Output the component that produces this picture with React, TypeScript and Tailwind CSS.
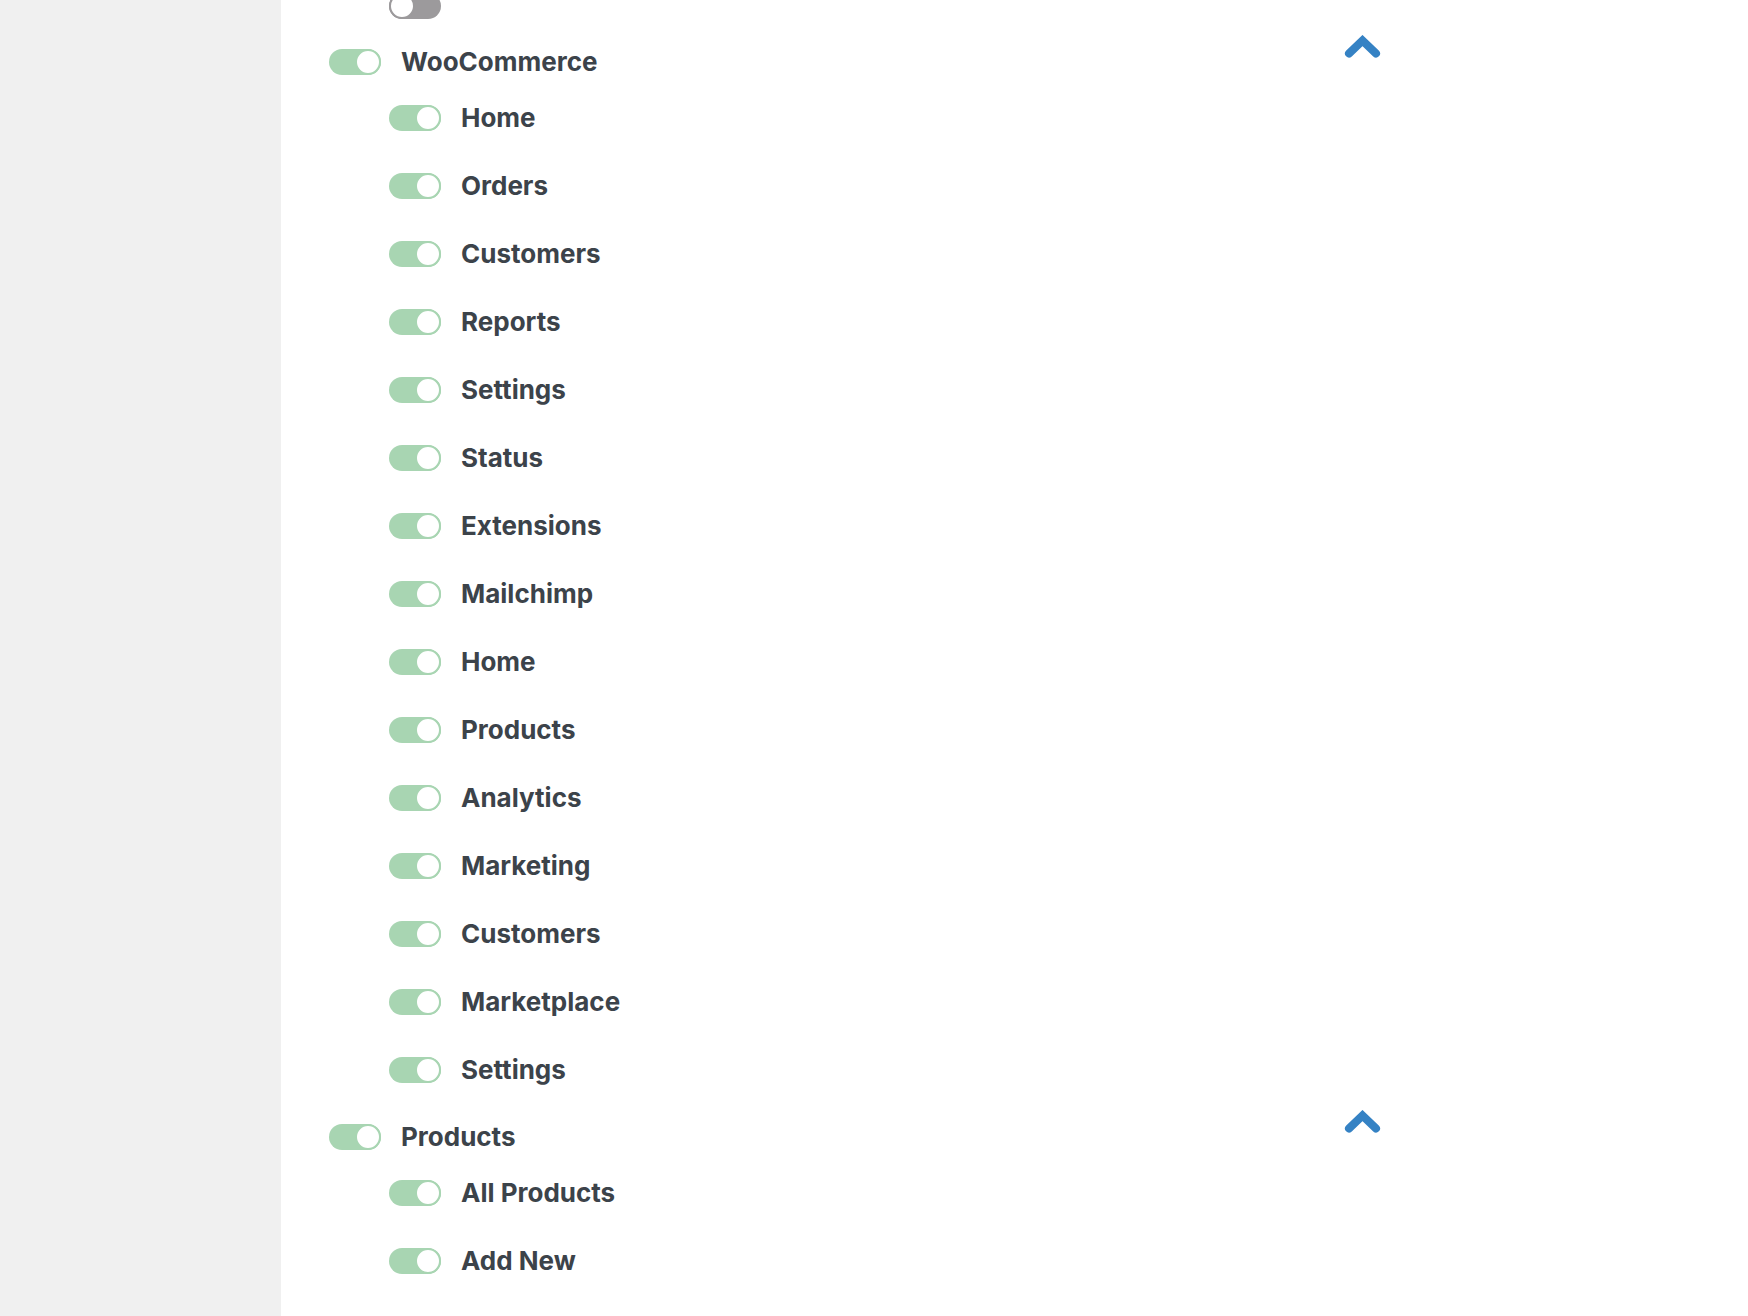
import React from "react";

const Toggle = ({ on = true }: { on?: boolean }) =>
  on ? (
    <div className="flex h-[26px] w-[52px] shrink-0 items-center justify-end rounded-full bg-[#a8d5b2]">
      <div className="h-[26px] w-[26px] rounded-full border-[2px] border-[#a8d5b2] bg-white" />
    </div>
  ) : (
    <div className="flex h-[26px] w-[52px] shrink-0 items-center justify-start rounded-full bg-[#9c9a9c]">
      <div className="h-[26px] w-[26px] rounded-full border-[2px] border-[#9c9a9c] bg-white" />
    </div>
  );

const Chevron = () => (
  <svg width="37" height="23" viewBox="0 0 37 23" className="mt-[-14px] shrink-0">
    <polyline
      points="5,18.5 18.5,5.5 32,18.5"
      fill="none"
      stroke="#3582c4"
      strokeWidth="8"
      strokeLinecap="round"
      strokeLinejoin="miter"
    />
  </svg>
);

const woo = [
  "Home",
  "Orders",
  "Customers",
  "Reports",
  "Settings",
  "Status",
  "Extensions",
  "Mailchimp",
  "Home",
  "Products",
  "Analytics",
  "Marketing",
  "Customers",
  "Marketplace",
  "Settings",
];

const ChildRow = ({ label, first }: { label: string; first?: boolean }) => (
  <div className={`flex h-[26px] items-center gap-[20px] pl-[60px] ${first ? "mt-[30px]" : "mt-[42px]"}`}>
    <Toggle />
    <span className="text-[26px] font-bold leading-none text-[#3c434a]">{label}</span>
  </div>
);

const ParentRow = ({ label, className }: { label: string; className: string }) => (
  <div className={`flex h-[26px] items-start justify-between ${className}`}>
    <div className="flex h-[26px] items-center gap-[20px]">
      <Toggle />
      <span className="text-[26px] font-bold leading-none text-[#3c434a]">{label}</span>
    </div>
    <Chevron />
  </div>
);

export default function App() {
  return (
    <div
      className="flex h-[1316px] w-full overflow-hidden bg-white"
      style={{ fontFamily: "Inter, 'Noto Sans', sans-serif" }}
    >
      <div className="h-full w-[281px] shrink-0 bg-[#f0f0f0]" />
      <div className="flex w-[1100px] flex-col pl-[48px]">
        <div className="mt-[-7px] flex h-[26px] items-center pl-[60px]">
          <Toggle on={false} />
        </div>
        <ParentRow label="WooCommerce" className="mt-[30px]" />
        {woo.map((l, i) => (
          <ChildRow key={i} label={l} first={i === 0} />
        ))}
        <ParentRow label="Products" className="mt-[41px]" />
        <ChildRow label="All Products" first />
        <ChildRow label="Add New" />
      </div>
    </div>
  );
}
